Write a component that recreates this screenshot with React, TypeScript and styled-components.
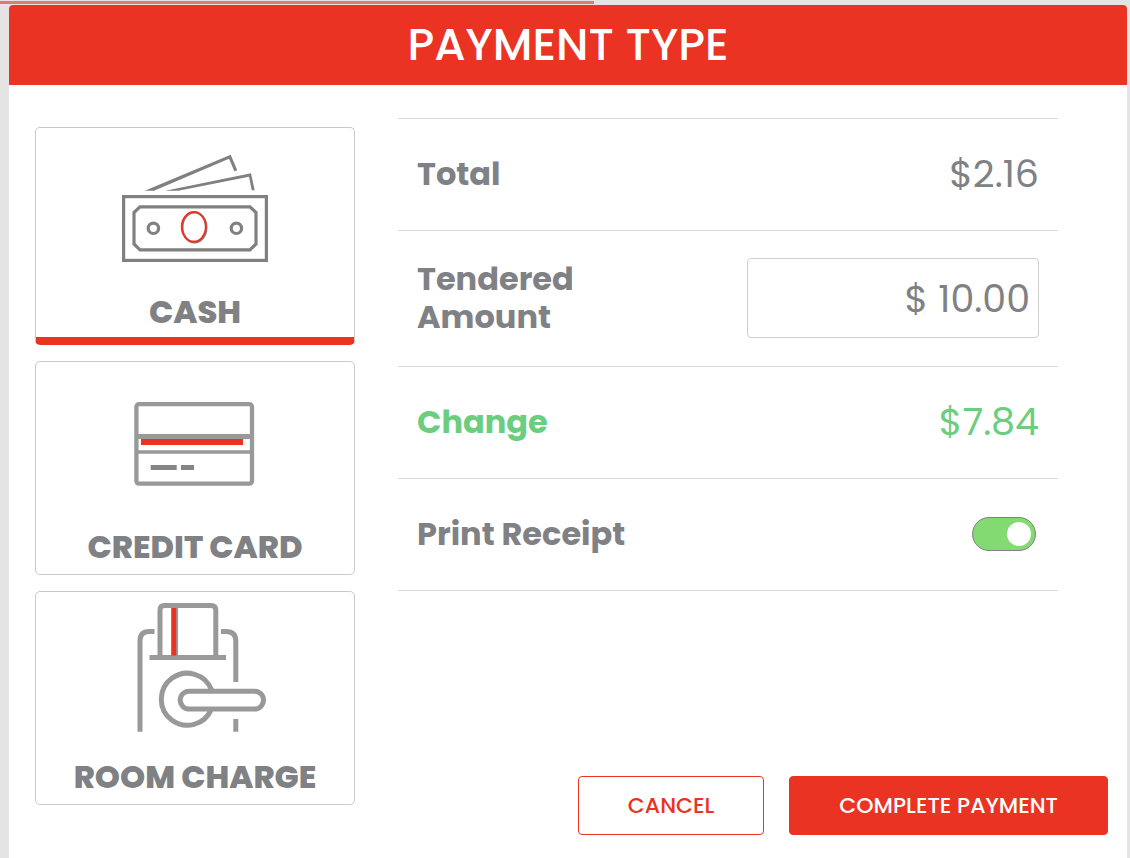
import React, { useState } from "react";
import styled, { createGlobalStyle } from "styled-components";

const red = "#ea3323";
const grey = "#808184";
const green = "#6bcd7e";
const line = "#dcdcdc";

const GlobalStyle = createGlobalStyle`
  *, *::before, *::after { box-sizing: border-box; }
  body {
    margin: 0;
    background: #e4e4e4;
    color: ${grey};
    font-family: Poppins, Inter, "Liberation Sans", sans-serif;
  }
  button, input { font-family: inherit; }
`;

const Page = styled.div`
  display: flex;
  flex-direction: column;
  min-height: 100vh;
`;

const LoadingTrack = styled.div`
  height: 5px;
  padding-top: 1px;
`;

const LoadingBar = styled.div`
  width: 52.6%;
  height: 3px;
  background: #df7b73;
`;

const Dialog = styled.main`
  flex: 1;
  display: flex;
  flex-direction: column;
  margin: 0 3px 0 9px;
  border-radius: 4px 4px 0 0;
  overflow: hidden;
  background: #fff;
`;

const Header = styled.header`
  display: flex;
  align-items: center;
  justify-content: center;
  height: 80px;
  background: ${red};
  color: #fff;
`;

const Title = styled.h1`
  margin: 0;
  font-size: 45px;
  font-weight: 500;
  line-height: 64px;
`;

const Body = styled.div`
  flex: 1;
  display: grid;
  grid-template-columns: 320px minmax(0, 1fr);
  column-gap: 43px;
  padding: 33px 19px 23px 26px;
`;

const Methods = styled.div`
  display: flex;
  flex-direction: column;
  gap: 16px;
  padding-top: 9px;
`;

const Method = styled.button<{ $active: boolean }>`
  display: flex;
  flex-direction: column;
  align-items: center;
  justify-content: space-between;
  height: ${(p) => (p.$active ? 218 : 214)}px;
  padding: 8px 8px ${(p) => (p.$active ? 1 : 3)}px;
  border: 1px solid #c9c9c9;
  border-bottom: ${(p) => (p.$active ? `8px solid ${red}` : "1px solid #c9c9c9")};
  border-radius: 5px;
  background: #fff;
  color: ${grey};
  font-size: 32px;
  font-weight: 800;
  line-height: 48px;
  cursor: pointer;
`;

const Icon = styled.svg`
  width: 160px;
  height: 136px;
  fill: none;
`;

const Details = styled.section`
  display: flex;
  flex-direction: column;
  justify-content: space-between;
  gap: 24px;
`;

const Rows = styled.div`
  margin-right: 50px;
  border-top: 1px solid ${line};
`;

const Row = styled.div<{ $positive?: boolean }>`
  display: flex;
  align-items: center;
  justify-content: space-between;
  min-height: 112px;
  padding: 27px 19px 28px;
  border-bottom: 1px solid ${line};
  color: ${(p) => (p.$positive ? green : grey)};
`;

const Label = styled.label`
  max-width: 240px;
  font-size: 32px;
  font-weight: 700;
  line-height: 38px;
`;

const Amount = styled.output`
  font-size: 38px;
  font-weight: 400;
  line-height: 48px;
`;

const AmountInput = styled.input`
  width: 292px;
  height: 80px;
  padding: 0 8px;
  border: 1px solid #cfcfd2;
  border-radius: 4px;
  background: #fff;
  color: ${grey};
  font-size: 38px;
  font-weight: 400;
  text-align: right;
`;

const Toggle = styled.input`
  appearance: none;
  display: flex;
  align-items: center;
  width: 64px;
  height: 34px;
  margin: 0 3px 0 0;
  padding: 0 4px;
  border: 1px solid ${grey};
  border-radius: 17px;
  background: #c9c9c9;
  cursor: pointer;

  &::before {
    content: "";
    width: 24px;
    height: 24px;
    border-radius: 50%;
    background: #fff;
  }

  &:checked {
    justify-content: flex-end;
    background: #82da70;
  }
`;

const Actions = styled.footer`
  display: flex;
  justify-content: flex-end;
  gap: 25px;
`;

const Action = styled.button<{ $primary?: boolean }>`
  height: 59px;
  padding: 0 49px;
  border: 1px solid ${red};
  border-radius: 4px;
  background: ${(p) => (p.$primary ? red : "#fff")};
  color: ${(p) => (p.$primary ? "#fff" : red)};
  font-size: 22px;
  font-weight: 500;
  cursor: pointer;
`;

const CashIcon = () => (
  <Icon viewBox="0 0 160 136" aria-hidden="true" stroke="#808080" strokeWidth="3.2">
    <g fill="#808080" stroke="none">
      <path d="M29.700 54.700 L115.700 18.700 L122.300 34.300 L119.300 35.300 L114 22.700 L39 54.700 Z" />
      <path d="M50.300 54.700 L136 37.300 L139.700 54.300 H136.700 L134 40.700 L63.300 54.700 Z" />
    </g>
    <rect x="8.600" y="60.600" width="142.800" height="63.800" />
    <path d="M25 70.800 H135 L141 76.500 V108 L135 113.800 H25 L19 108 V76.500 Z" />
    <circle cx="38.400" cy="92.300" r="5.200" />
    <circle cx="121.400" cy="92.300" r="5.200" />
    <ellipse cx="79.500" cy="91.500" rx="12" ry="15" strokeWidth="2" />
    <ellipse cx="78.800" cy="90.800" rx="12" ry="14.800" stroke={red} strokeWidth="2" />
  </Icon>
);

const CardIcon = () => (
  <Icon viewBox="0 0 160 136" aria-hidden="true" stroke="#999" strokeWidth="4.300">
    <rect x="21.400" y="34.200" width="115.600" height="79.400" rx="2.500" />
    <path d="M22 66.500 H137" strokeWidth="5" />
    <path d="M22 82 H137" strokeWidth="3.500" />
    <path d="M26 72 H128" stroke={red} strokeWidth="6" />
    <path d="M35.700 97.500 H61.700 M66 97.500 H79" stroke="#858585" strokeWidth="5" />
  </Icon>
);

const RoomIcon = () => (
  <Icon viewBox="0 0 160 136" aria-hidden="true" stroke="#999" strokeWidth="5">
    <path d="M25 131.700 V41 Q25 31.500 34 31.500 H39.500" />
    <path d="M106 31.500 H111 Q120.800 31.500 120.800 41 V82 M120.800 119 V131.700" />
    <path d="M45 58 V10 Q45 5.500 49.500 5.500 H96 Q100.800 5.500 100.800 10 V58" />
    <path d="M34.500 57.500 H111" />
    <path d="M62 8 V56" strokeWidth="2" />
    <path d="M58.700 8 V55.500" stroke={red} strokeWidth="5" />
    <path d="M96.600 90 A26 26 0 1 0 96.400 109" />
    <rect x="65.200" y="91.200" width="83.300" height="17.800" rx="8.900" />
  </Icon>
);

const methods = [
  { name: "CASH", Drawing: CashIcon },
  { name: "CREDIT CARD", Drawing: CardIcon },
  { name: "ROOM CHARGE", Drawing: RoomIcon },
];

export default function App() {
  const [method, setMethod] = useState("CASH");
  const [tendered, setTendered] = useState("$ 10.00");
  const [receipt, setReceipt] = useState(true);

  return (
    <>
      <GlobalStyle />
      <Page>
        <LoadingTrack>
          <LoadingBar />
        </LoadingTrack>
        <Dialog>
          <Header>
            <Title>PAYMENT TYPE</Title>
          </Header>
          <Body>
            <Methods>
              {methods.map(({ name, Drawing }) => (
                <Method
                  key={name}
                  type="button"
                  $active={name === method}
                  aria-pressed={name === method}
                  onClick={() => setMethod(name)}
                >
                  <Drawing />
                  <span>{name}</span>
                </Method>
              ))}
            </Methods>
            <Details>
              <Rows>
                <Row>
                  <Label htmlFor="total">Total</Label>
                  <Amount id="total">$2.16</Amount>
                </Row>
                <Row>
                  <Label htmlFor="tendered">
                    Tendered
                    <br />
                    Amount
                  </Label>
                  <AmountInput
                    id="tendered"
                    type="text"
                    inputMode="decimal"
                    value={tendered}
                    onChange={(e) => setTendered(e.target.value)}
                  />
                </Row>
                <Row $positive>
                  <Label htmlFor="change">Change</Label>
                  <Amount id="change">$7.84</Amount>
                </Row>
                <Row>
                  <Label htmlFor="receipt">Print Receipt</Label>
                  <Toggle
                    id="receipt"
                    type="checkbox"
                    role="switch"
                    checked={receipt}
                    onChange={(e) => setReceipt(e.target.checked)}
                  />
                </Row>
              </Rows>
              <Actions>
                <Action type="button">CANCEL</Action>
                <Action type="button" $primary>
                  COMPLETE PAYMENT
                </Action>
              </Actions>
            </Details>
          </Body>
        </Dialog>
      </Page>
    </>
  );
}
